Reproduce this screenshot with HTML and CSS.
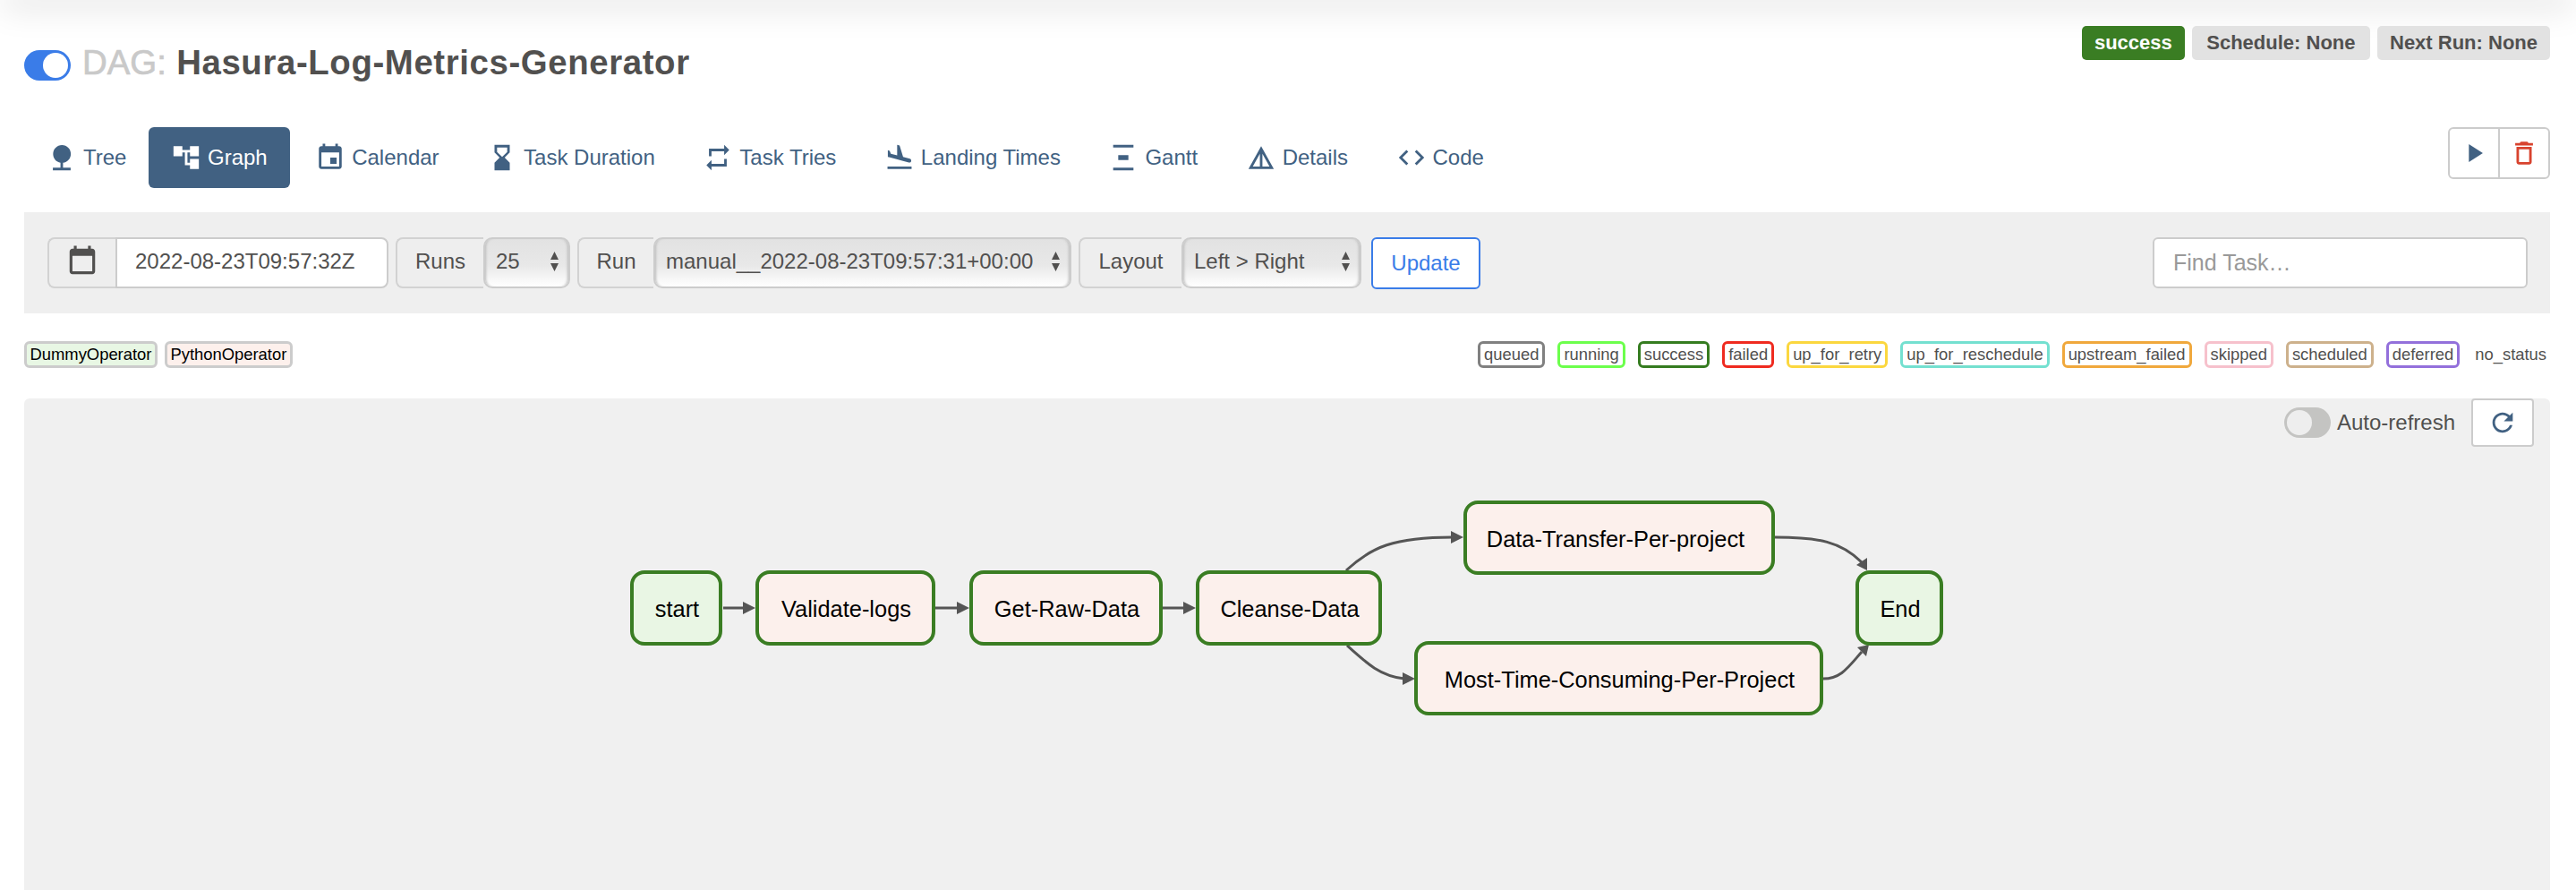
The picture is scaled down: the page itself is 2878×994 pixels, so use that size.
FILE: index.html
```html
<!DOCTYPE html>
<html lang="en">
<head>
<meta charset="utf-8">
<title>Hasura-Log-Metrics-Generator - Graph</title>
<link rel="stylesheet" href="styles.css">
</head>
<body>
<div class="top-shadow"></div>
<main class="page">
  <header class="title-row">
    <div class="title">
      <span class="pill pill-on"><span class="knob"></span></span>
      <h3 class="dag-title"><span class="dag-label">DAG:</span> Hasura-Log-Metrics-Generator</h3>
    </div>
    <div class="badges">
      <span class="badge badge-success">success</span>
      <span class="badge badge-schedule">Schedule: None</span>
      <span class="badge">Next Run: None</span>
    </div>
  </header>

  <nav class="nav-row">
    <ul class="tabs">
      <li class="tab tab-tree"><svg class="ico" viewBox="0 0 24 24"><path d="M13 16.12c3.47-.41 6.17-3.36 6.17-6.95 0-3.87-3.13-7-7-7s-7 3.13-7 7c0 3.47 2.52 6.34 5.83 6.89V20H5v2h14v-2h-6v-3.88z"/></svg>Tree</li>
      <li class="tab tab-active"><svg class="ico" viewBox="0 0 24 24"><path d="M22 11V3h-7v3H9V3H2v8h7V8h2v10h4v3h7v-8h-7v3h-2V8h2v3z"/></svg>Graph</li>
      <li class="tab"><svg class="ico" viewBox="0 0 24 24"><path d="M17 12h-5v5h5v-5zM16 1v2H8V1H6v2H5c-1.11 0-1.99.9-1.99 2L3 19c0 1.1.89 2 2 2h14c1.1 0 2-.9 2-2V5c0-1.1-.9-2-2-2h-1V1h-2zm3 18H5V8h14v11z"/></svg>Calendar</li>
      <li class="tab"><svg class="ico" viewBox="0 0 24 24"><path d="M18 22l-.01-6L14 12l3.99-4.01L18 2H6v6l4 4-4 3.99V22h12zM8 7.5V4h8v3.5l-4 4-4-4z"/></svg>Task Duration</li>
      <li class="tab"><svg class="ico" viewBox="0 0 24 24"><path d="M7 7h10v3l4-4-4-4v3H5v6h2V7zm10 10H7v-3l-4 4 4 4v-3h12v-6h-2v4z"/></svg>Task Tries</li>
      <li class="tab"><svg class="ico" viewBox="0 0 24 24"><path d="M2.5 19h19v2h-19zm7.18-5.73l4.35 1.16 5.31 1.42c.8.21 1.62-.26 1.84-1.06.21-.8-.26-1.62-1.06-1.84l-5.31-1.42-2.76-9.02L10.12 2v8.28L5.15 8.95l-.93-2.32-1.45-.39v5.17l1.6.43 5.31 1.43z"/></svg>Landing Times</li>
      <li class="tab"><svg class="ico" viewBox="0 0 24 24"><path d="M4 22h16v-2H4v2zM4 4h16V2H4v2zm4 6v4h8v-4H8z"/></svg>Gantt</li>
      <li class="tab"><svg class="ico" viewBox="0 0 24 24"><path d="M12 3L2 21h20L12 3zm1 5.92L18.6 19H13V8.92zm-2 0V19H5.4L11 8.92z"/></svg>Details</li>
      <li class="tab"><svg class="ico" viewBox="0 0 24 24"><path d="M9.4 16.6L4.8 12l4.6-4.6L8 6l-6 6 6 6 1.4-1.4zm5.2 0l4.6-4.6-4.6-4.6L16 6l6 6-6 6-1.4-1.4z"/></svg>Code</li>
    </ul>
    <div class="btn-group">
      <span class="btn-icon"><svg class="ico" viewBox="0 0 24 24"><path d="M8 5v14l11-7z"/></svg></span>
      <span class="btn-icon btn-danger"><svg class="ico" viewBox="0 0 24 24"><path d="M6 19c0 1.1.9 2 2 2h8c1.1 0 2-.9 2-2V7H6v12zM8 9h8v10H8V9zm7.5-5l-1-1h-5l-1 1H5v2h14V4z"/></svg></span>
    </div>
  </nav>

  <section class="toolbar">
    <div class="controls">
      <div class="group">
        <span class="addon addon-cal"><svg class="ico ico-cal" viewBox="0 0 24 24"><path d="M16 1v2H8V1H6v2H5c-1.11 0-1.99.9-1.99 2L3 19c0 1.1.89 2 2 2h14c1.1 0 2-.9 2-2V5c0-1.1-.9-2-2-2h-1V1h-2zm3 18H5V8h14v11z"/></svg></span>
        <span class="date-field">2022-08-23T09:57:32Z</span>
      </div>
      <div class="group">
        <span class="addon addon-runs">Runs</span>
        <span class="select select-runs"><span>25</span><svg class="updown" viewBox="0 0 10 24"><path d="M5 1l4.5 9H.5zM5 23L.5 14h9z"/></svg></span>
      </div>
      <div class="group">
        <span class="addon addon-run">Run</span>
        <span class="select select-run"><span>manual__2022-08-23T09:57:31+00:00</span><svg class="updown" viewBox="0 0 10 24"><path d="M5 1l4.5 9H.5zM5 23L.5 14h9z"/></svg></span>
      </div>
      <div class="group">
        <span class="addon addon-layout">Layout</span>
        <span class="select select-layout"><span>Left &gt; Right</span><svg class="updown" viewBox="0 0 10 24"><path d="M5 1l4.5 9H.5zM5 23L.5 14h9z"/></svg></span>
      </div>
      <span class="update">Update</span>
    </div>
    <span class="find">Find Task…</span>
  </section>

  <section class="legend-row">
    <div class="legend">
      <span class="chip chip-dummy">DummyOperator</span>
      <span class="chip chip-python">PythonOperator</span>
    </div>
    <div class="legend legend-status">
      <span class="state s-queued">queued</span>
      <span class="state s-running">running</span>
      <span class="state s-success">success</span>
      <span class="state s-failed">failed</span>
      <span class="state s-retry">up_for_retry</span>
      <span class="state s-resched">up_for_reschedule</span>
      <span class="state s-upstream">upstream_failed</span>
      <span class="state s-skipped">skipped</span>
      <span class="state s-scheduled">scheduled</span>
      <span class="state s-deferred">deferred</span>
      <span class="state s-none">no_status</span>
    </div>
  </section>

  <section class="graph">
    <svg class="edges" viewBox="0 0 2822 549">
      <g class="edge-lines">
        <path d="M781 234H805"/>
        <path d="M1018 234H1044"/>
        <path d="M1272 234H1297"/>
        <path d="M1477 192C1505 166 1530 155 1596 155"/>
        <path d="M1478 276C1500 296 1515 310 1542 313"/>
        <path d="M1956 155C2005 155 2030 160 2053 183"/>
        <path d="M2010 313C2030 313 2038 300 2053 283"/>
      </g>
      <g class="edge-heads">
        <path d="M803 227L817 234L803 241Z"/>
        <path d="M1042 227L1056 234L1042 241Z"/>
        <path d="M1295 227L1309 234L1295 241Z"/>
        <path d="M1594 148L1608 155L1594 162Z"/>
        <path d="M1540 306L1554 313L1540 320Z"/>
        <path d="M2059 192L2059 178L2047 186Z"/>
        <path d="M2061 275L2058 288L2048 278Z"/>
      </g>
    </svg>
    <div class="node node-dummy n-start">start</div>
    <div class="node node-python n-validate">Validate-logs</div>
    <div class="node node-python n-raw">Get-Raw-Data</div>
    <div class="node node-python n-cleanse">Cleanse-Data</div>
    <div class="node node-python n-transfer">Data-Transfer-Per-project</div>
    <div class="node node-python n-most">Most-Time-Consuming-Per-Project</div>
    <div class="node node-dummy n-end">End</div>
    <div class="refresh-row">
      <span class="pill pill-off"><span class="knob"></span></span>
      <span class="refresh-label">Auto-refresh</span>
      <span class="refresh-btn"><svg class="ico" viewBox="0 0 24 24"><path d="M17.65 6.35C16.2 4.9 14.21 4 12 4c-4.42 0-7.99 3.58-7.99 8s3.57 8 7.99 8c3.73 0 6.84-2.55 7.73-6h-2.08c-.82 2.33-3.04 4-5.65 4-3.31 0-6-2.69-6-6s2.69-6 6-6c1.66 0 3.14.69 4.22 1.78L13 11h7V4l-2.35 2.35z"/></svg></span>
    </div>
  </section>
</main>
</body>
</html>
```
FILE: styles.css
```css
* { box-sizing: border-box; }
html, body { margin: 0; padding: 0; background: #fff; }
body {
  font-family: "Liberation Sans", Arial, sans-serif;
  font-size: 24px;
  color: #51504f;
  height: 994px;
  overflow: hidden;
}
.top-shadow {
  height: 0;
  margin: 0 10px;
  box-shadow: 0 0 36px 8px rgba(0, 0, 0, .15);
}
.page { padding: 29px 29px 0 27px; }

/* title row */
.title-row {
  display: flex;
  justify-content: space-between;
  align-items: flex-start;
  height: 113px;
}
.title { display: flex; align-items: center; gap: 13px; margin-top: 17px; }
.dag-title {
  margin: 0 0 6px;
  font-size: 38.4px;
  line-height: 48px;
  font-weight: 700;
  letter-spacing: .6px;
  white-space: nowrap;
}
.dag-label { color: #c9c9c9; font-weight: 400; letter-spacing: 0; -webkit-text-stroke: .7px #c9c9c9; }
.pill {
  display: flex;
  width: 52px;
  height: 34px;
  border-radius: 17px;
  padding: 3px;
}
.pill .knob { width: 28px; height: 28px; border-radius: 50%; }
.pill-on { background: #3a7ce8; justify-content: flex-end; }
.pill-on .knob { background: #fff; }
.pill-off { background: #c4c4c2; justify-content: flex-start; }
.pill-off .knob { background: #eee; }
.badges { display: flex; gap: 8px; }
.badge {
  height: 38px;
  line-height: 38px;
  padding: 0 14px;
  border-radius: 5px;
  background: #e2e2e2;
  font-size: 22px;
  font-weight: 700;
}
.badge-schedule { padding: 0 16.5px; }
.badge-success { background: #3a7d23; color: #fff; }

/* nav */
.nav-row { display: flex; justify-content: space-between; align-items: flex-start; height: 68px; }
.tabs { display: flex; gap: 3.5px; list-style: none; margin: 0; padding: 0; }
.tab {
  display: flex;
  align-items: center;
  gap: 7px;
  height: 68px;
  padding: 0 25px;
  border-radius: 6px;
  color: #416182;
  white-space: nowrap;
}
.tab-tree { padding-right: 21px; }
.tab-active { background: #416182; color: #fff; }
.ico { width: 34px; height: 34px; fill: currentColor; flex: none; }
.btn-group {
  display: flex;
  width: 114px;
  height: 58px;
  border: 2px solid #ccc;
  border-radius: 6px;
}
.btn-icon {
  flex: 1;
  display: flex;
  align-items: center;
  justify-content: center;
  color: #416182;
}
.btn-danger { border-left: 2px solid #ccc; color: #d8432e; }

/* toolbar */
.toolbar {
  display: flex;
  justify-content: space-between;
  align-items: center;
  height: 113px;
  margin-top: 27px;
  padding: 0 25px 0 26px;
  background: #efefef;
}
.controls { display: flex; align-items: center; gap: 8px; }
.group { display: flex; height: 57px; }
.addon {
  display: flex;
  align-items: center;
  justify-content: center;
  height: 57px;
  padding-bottom: 4px;
  border: 2px solid #d2d2d2;
  border-right: 0;
  border-radius: 8px 0 0 8px;
  background: #eee;
}
.addon-cal { width: 76px; color: #51504f; }
.addon-runs { width: 98px; }
.addon-run { width: 85px; }
.addon-layout { width: 115px; }
.ico-cal { width: 38px; height: 38px; }
.date-field {
  display: flex;
  align-items: center;
  width: 305px;
  padding: 0 0 4px 20px;
  background: #fff;
  border: 2px solid #ccc;
  border-radius: 0 8px 8px 0;
}
.select {
  display: flex;
  align-items: center;
  justify-content: space-between;
  height: 57px;
  padding: 0 10px 4px 12px;
  border: 2px solid #ccc;
  border-radius: 10px;
  background: linear-gradient(#e2e2e2, #e8e8e8 55%, #fff);
  box-shadow: inset 3px 0 3px -2px #bbb, inset -3px 0 3px -2px #bbb;
}
.select-runs { width: 97px; }
.select-run { width: 467px; }
.select-layout { width: 201px; }
.updown { width: 11px; height: 24px; fill: #51504f; }
.update {
  display: flex;
  align-items: center;
  justify-content: center;
  width: 122px;
  height: 58px;
  margin-left: 3px;
  background: #fff;
  border: 2px solid #3a7ce8;
  border-radius: 6px;
  color: #3a7ce8;
}
.find {
  display: flex;
  align-items: center;
  width: 419px;
  height: 57px;
  padding-left: 21px;
  background: #fff;
  border: 2px solid #ccc;
  border-radius: 6px;
  color: #999;
  font-size: 25px;
}

/* legends */
.legend-row {
  display: flex;
  justify-content: space-between;
  align-items: center;
  height: 30px;
  margin-top: 31px;
  font-size: 18.4px;
}
.legend { display: flex; gap: 8px; }
.legend-status { gap: 14px; padding-right: 1px; }
.chip, .state {
  display: flex;
  align-items: center;
  height: 30px;
  padding: 0 4px;
  border: 3px solid #ccc;
  border-radius: 6px;
  color: #000;
}
.chip { padding: 0 3.5px; }
.chip-dummy { background: #e8f7e4; }
.chip-python { background: #fdf0ec; }
.state { color: #51504f; background: #fff; }
.s-queued { border-color: #808080; }
.s-running { border-color: #6cff4c; }
.s-success { border-color: #357c20; }
.s-failed { border-color: #ef2b20; }
.s-retry { border-color: #fbd73f; }
.s-resched { border-color: #74e0d0; }
.s-upstream { border-color: #f0a83c; }
.s-skipped { border-color: #f6c1cc; }
.s-scheduled { border-color: #cdb18c; }
.s-deferred { border-color: #9370db; }
.s-none { border-color: transparent; padding: 0; }

/* graph */
.graph {
  position: relative;
  height: 549px;
  margin-top: 34px;
  background: #f0f0f0;
  border-radius: 6px 6px 0 0;
  display: flex;
  justify-content: flex-end;
  align-items: flex-start;
}
.edges { position: absolute; left: 0; top: 0; width: 2822px; height: 549px; }
.edge-lines path { fill: none; stroke: #555; stroke-width: 3; }
.edge-heads path { fill: #555; }
.node {
  position: absolute;
  display: flex;
  align-items: center;
  justify-content: center;
  height: 84px;
  top: 192px;
  padding: 3px 0 0 2px;
  border: 4px solid #3a7d23;
  border-radius: 16px;
  color: #000;
  font-size: 25.4px;
  white-space: nowrap;
}
.node-dummy { background: #e9f6e4; }
.node-python { background: #fcf0ec; }
.n-start { left: 677px; width: 103px; }
.n-validate { left: 817px; width: 201px; }
.n-raw { left: 1056px; width: 216px; }
.n-cleanse { left: 1309px; width: 208px; }
.n-transfer { left: 1608px; top: 114px; width: 348px; height: 83px; padding-left: 0; padding-right: 8px; }
.n-most { left: 1553px; top: 271px; width: 457px; height: 83px; }
.n-end { left: 2046px; width: 98px; }
.refresh-row {
  position: relative;
  display: flex;
  align-items: flex-start;
  margin-right: 18px;
}
.refresh-row .pill { margin-top: 10px; }
.refresh-label { margin: 10px 18px 0 7px; line-height: 34px; }
.refresh-btn {
  display: flex;
  align-items: center;
  justify-content: center;
  width: 70px;
  height: 54px;
  background: #fff;
  border: 2px solid #ccc;
  border-radius: 4px;
  color: #416182;
}
```
